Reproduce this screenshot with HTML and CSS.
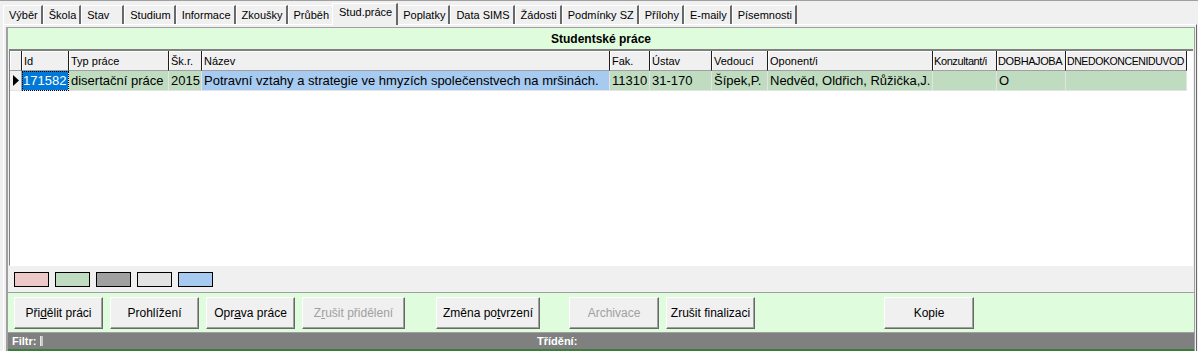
FILE: index.html
```html
<!DOCTYPE html>
<html lang="cs">
<head>
    <meta charset="UTF-8">
    <title>Studentské práce</title>
    <link rel="stylesheet" href="styles.css">
</head>
<body>
    <div class="tabs">
        <div class="tab">Výběr</div>
        <div class="tab">Škola</div>
        <div class="tab tab-wide">Stav</div>
        <div class="tab">Studium</div>
        <div class="tab">Informace</div>
        <div class="tab">Zkoušky</div>
        <div class="tab">Průběh</div>
        <div class="tab active">Stud.práce</div>
        <div class="tab">Poplatky</div>
        <div class="tab">Data SIMS</div>
        <div class="tab">Žádosti</div>
        <div class="tab">Podmínky SZ</div>
        <div class="tab">Přílohy</div>
        <div class="tab">E-maily</div>
        <div class="tab">Písemnosti</div>
    </div>

    <div class="page">
        <div class="panel">
            <div class="title">Studentské práce</div>

            <div class="grid">
                <table>
                    <thead>
                        <tr>
                            <th class="c-ind"></th>
                            <th class="c-id">Id</th>
                            <th class="c-typ">Typ práce</th>
                            <th class="c-rok">Šk.r.</th>
                            <th class="c-nazev">Název</th>
                            <th class="c-fak">Fak.</th>
                            <th class="c-ustav">Ústav</th>
                            <th class="c-ved">Vedoucí</th>
                            <th class="c-opon">Oponent/i</th>
                            <th class="c-konz tight">Konzultant/i</th>
                            <th class="c-dob tight">DOBHAJOBA</th>
                            <th class="c-dne tighter">DNEDOKONCENIDUVOD</th>
                        </tr>
                    </thead>
                    <tbody>
                        <tr>
                            <td class="ind">
                                <svg width="6" height="11" viewBox="0 0 6 11"><path d="M0 0 L6 5.5 L0 11 Z" fill="#000"/></svg>
                            </td>
                            <td class="selected">171582</td>
                            <td>disertační práce</td>
                            <td>2015</td>
                            <td class="blue">Potravní vztahy a strategie ve hmyzích společenstvech na mršinách.</td>
                            <td>11310</td>
                            <td>31-170</td>
                            <td>Šípek,P.</td>
                            <td>Nedvěd, Oldřich, Růžička,J.</td>
                            <td></td>
                            <td>O</td>
                            <td></td>
                        </tr>
                    </tbody>
                </table>
            </div>

            <div class="legend">
                <span class="swatch pink"></span>
                <span class="swatch green"></span>
                <span class="swatch dark"></span>
                <span class="swatch light"></span>
                <span class="swatch blue"></span>
            </div>

            <div class="actions">
                <button class="btn">Při<u>d</u>ělit práci</button>
                <button class="btn">Prohlížení</button>
                <button class="btn">Opr<u>a</u>va práce</button>
                <button class="btn btn-wide" disabled>Z<u>r</u>ušit přidělení</button>
                <button class="btn btn-wide btn-confirm">Změna po<u>t</u>vrzení</button>
                <button class="btn btn-archive" disabled>Archivace</button>
                <button class="btn">Zrušit finalizaci</button>
                <button class="btn btn-copy">Kopie</button>
            </div>

            <div class="status">
                <div class="status-filter">Filtr: <span class="filter-mark"></span></div>
                <div class="status-sort">Třídění:</div>
            </div>
        </div>
    </div>
</body>
</html>
```

FILE: styles.css
```css
* {
    box-sizing: border-box;
}

body {
    margin: 0;
    width: 1198px;
    height: 351px;
    overflow: hidden;
    background-color: #f0f0f0;
    border-top: 1px solid #a0a0a0;
    font-family: "Liberation Sans", Arial, sans-serif;
    font-size: 11px;
    color: #000;
}

/* tab strip */
.tabs {
    display: flex;
    align-items: flex-end;
    height: 23px;
    padding-left: 3px;
}

.tab {
    flex-shrink: 0;
    height: 19px;
    padding: 3px 3px 0 5px;
    border-left: 1px solid #fff;
    border-top: 1px solid #fff;
    border-right: 2px solid #696969;
    white-space: nowrap;
}

.tab-wide {
    width: 43px;
}

.tab.active {
    height: 22px;
    padding-top: 2px;
    margin: 0 -1px -1px -2px;
    padding-left: 6px;
    padding-right: 4px;
    background-color: #f0f0f0;
    position: relative;
    z-index: 1;
}

/* page frame */
.page {
    height: 327px;
    margin: 0 1px 0 3px;
    padding: 2px 1px 0 2px;
    border-top: 1px solid #fff;
    border-left: 1px solid #fff;
    border-right: 1px solid #696969;
}

.panel {
    height: 100%;
    display: flex;
    flex-direction: column;
    border-top: 1px solid #a0a0a0;
    border-left: 2px solid #a0a0a0;
    border-right: 1px solid #a0a0a0;
}

.title {
    height: 21px;
    flex-shrink: 0;
    background-color: #dffcdc;
    font-size: 12px;
    font-weight: bold;
    text-align: center;
    line-height: 22px;
}

/* data grid */
.grid {
    height: 217px;
    flex-shrink: 0;
    margin: 0 1px;
    background-color: #fff;
    border-top: 2px solid #808080;
    border-left: 1px solid #808080;
    border-bottom: 1px solid #fff;
}

table {
    border-collapse: separate;
    border-spacing: 0;
    table-layout: fixed;
    width: 1177px;
}

th, td {
    height: 20px;
    padding: 0 2px;
    text-align: left;
    white-space: nowrap;
    overflow: hidden;
}

th {
    font-weight: normal;
    font-size: 11px;
    background-color: #f0f0f0;
    border-right: 1px solid #1e1e1e;
    border-bottom: 1px solid #a0a0a0;
    box-shadow: inset 1px 1px #fff;
    vertical-align: middle;
}

th.tight {
    letter-spacing: -0.4px;
    padding: 0 1px;
}

th.tighter {
    font-size: 10.5px;
    letter-spacing: -0.4px;
    padding: 0 1px;
}

td {
    font-size: 13px;
    background-color: #c0dcc0;
    border-right: 1px solid #e3e3e3;
    border-bottom: 1px solid #e3e3e3;
}

.c-ind { width: 12px; }
.c-id { width: 47px; }
.c-typ { width: 100px; }
.c-rok { width: 33px; }
.c-nazev { width: 408px; }
.c-fak { width: 40px; }
.c-ustav { width: 62px; }
.c-ved { width: 56px; }
.c-opon { width: 165px; }
.c-konz { width: 64px; }
.c-dob { width: 69px; }
.c-dne { width: 121px; }

td.ind {
    background-color: #f0f0f0;
    border-right: 1px solid #a0a0a0;
    padding: 3px 0 0 3px;
    vertical-align: top;
}

td.selected {
    background-color: #0078d7;
    color: #fff;
    outline: 1px dotted #000;
    outline-offset: -1px;
    padding-left: 1px;
}

td.blue {
    background-color: #a6caf0;
}

/* colour legend */
.legend {
    display: flex;
    gap: 6px;
    height: 26px;
    flex-shrink: 0;
    padding: 6px 0 0 6px;
}

.swatch {
    width: 35px;
    height: 15px;
    border: 1px solid #000;
}

.swatch.pink { background-color: #ecc8c8; }
.swatch.green { background-color: #c0dcc0; }
.swatch.dark { background-color: #a0a0a0; }
.swatch.light { background-color: #e3e3e3; }
.swatch.blue { background-color: #a6caf0; }

/* buttons */
.actions {
    display: flex;
    gap: 7px;
    height: 40px;
    flex-shrink: 0;
    padding: 4px 0 0 6px;
    background-color: #dffcdc;
    border-top: 1px solid #a0a0a0;
}

.btn {
    width: 89px;
    height: 32px;
    padding: 0;
    background-color: #f0f0f0;
    border: 1px solid;
    border-color: #fff #696969 #696969 #fff;
    box-shadow: inset -1px -1px #a0a0a0;
    font-family: "Liberation Sans", Arial, sans-serif;
    font-size: 12px;
    color: #000;
    white-space: nowrap;
}

.btn:disabled {
    color: #a0a0a0;
}

.btn-wide {
    width: 103px;
}

.btn-confirm {
    width: 104px;
    margin-left: 24px;
}

.btn-archive {
    width: 90px;
    margin-left: 22px;
}

.btn-copy {
    width: 90px;
    margin-left: 122px;
}

/* status bar */
.status {
    display: flex;
    height: 19px;
    flex-shrink: 0;
    background-color: #808080;
    border-top: 1px solid #a0a0a0;
    border-bottom: 2px solid #3a7d3a;
    color: #fff;
    font-weight: bold;
    line-height: 16px;
}

.status-filter {
    width: 529px;
    padding-left: 4px;
    display: flex;
    align-items: center;
    gap: 4px;
}

.filter-mark {
    width: 3px;
    height: 10px;
    background-color: #c8c8c8;
    border-left: 1px solid #e8e8e8;
}
```
